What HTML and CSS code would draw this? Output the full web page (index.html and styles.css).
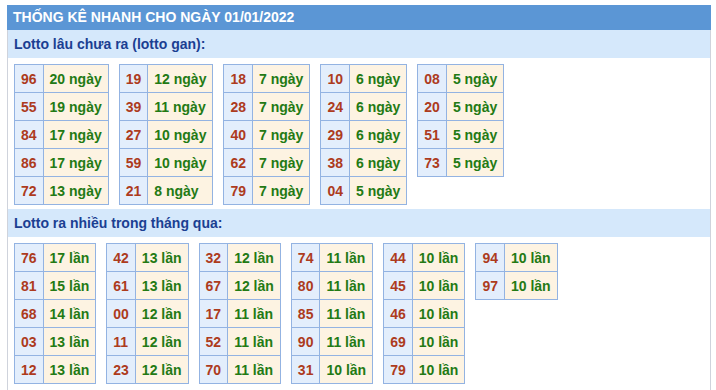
FILE: index.html
```html
<!DOCTYPE html>
<html lang="vi">
<head>
<meta charset="utf-8">
<link rel="stylesheet" href="styles.css">
</head>
<body>
<div class="box">
  <div class="title">THỐNG KÊ NHANH CHO NGÀY 01/01/2022</div>
  <div class="sec">Lotto lâu chưa ra (lotto gan):</div>
  <div class="tables">
    <table><tr><td class="n">96</td><td class="v">20 ngày</td></tr><tr><td class="n">55</td><td class="v">19 ngày</td></tr><tr><td class="n">84</td><td class="v">17 ngày</td></tr><tr><td class="n">86</td><td class="v">17 ngày</td></tr><tr><td class="n">72</td><td class="v">13 ngày</td></tr></table>
    <table><tr><td class="n">19</td><td class="v">12 ngày</td></tr><tr><td class="n">39</td><td class="v">11 ngày</td></tr><tr><td class="n">27</td><td class="v">10 ngày</td></tr><tr><td class="n">59</td><td class="v">10 ngày</td></tr><tr><td class="n">21</td><td class="v">8 ngày</td></tr></table>
    <table><tr><td class="n">18</td><td class="v">7 ngày</td></tr><tr><td class="n">28</td><td class="v">7 ngày</td></tr><tr><td class="n">40</td><td class="v">7 ngày</td></tr><tr><td class="n">62</td><td class="v">7 ngày</td></tr><tr><td class="n">79</td><td class="v">7 ngày</td></tr></table>
    <table><tr><td class="n">10</td><td class="v">6 ngày</td></tr><tr><td class="n">24</td><td class="v">6 ngày</td></tr><tr><td class="n">29</td><td class="v">6 ngày</td></tr><tr><td class="n">38</td><td class="v">6 ngày</td></tr><tr><td class="n">04</td><td class="v">5 ngày</td></tr></table>
    <table><tr><td class="n">08</td><td class="v">5 ngày</td></tr><tr><td class="n">20</td><td class="v">5 ngày</td></tr><tr><td class="n">51</td><td class="v">5 ngày</td></tr><tr><td class="n">73</td><td class="v">5 ngày</td></tr></table>
  </div>
  <div class="sec">Lotto ra nhiều trong tháng qua:</div>
  <div class="tables">
    <table><tr><td class="n">76</td><td class="v">17 lần</td></tr><tr><td class="n">81</td><td class="v">15 lần</td></tr><tr><td class="n">68</td><td class="v">14 lần</td></tr><tr><td class="n">03</td><td class="v">13 lần</td></tr><tr><td class="n">12</td><td class="v">13 lần</td></tr></table>
    <table><tr><td class="n">42</td><td class="v">13 lần</td></tr><tr><td class="n">61</td><td class="v">13 lần</td></tr><tr><td class="n">00</td><td class="v">12 lần</td></tr><tr><td class="n">11</td><td class="v">12 lần</td></tr><tr><td class="n">23</td><td class="v">12 lần</td></tr></table>
    <table><tr><td class="n">32</td><td class="v">12 lần</td></tr><tr><td class="n">67</td><td class="v">12 lần</td></tr><tr><td class="n">17</td><td class="v">11 lần</td></tr><tr><td class="n">52</td><td class="v">11 lần</td></tr><tr><td class="n">70</td><td class="v">11 lần</td></tr></table>
    <table><tr><td class="n">74</td><td class="v">11 lần</td></tr><tr><td class="n">80</td><td class="v">11 lần</td></tr><tr><td class="n">85</td><td class="v">11 lần</td></tr><tr><td class="n">90</td><td class="v">11 lần</td></tr><tr><td class="n">31</td><td class="v">10 lần</td></tr></table>
    <table><tr><td class="n">44</td><td class="v">10 lần</td></tr><tr><td class="n">45</td><td class="v">10 lần</td></tr><tr><td class="n">46</td><td class="v">10 lần</td></tr><tr><td class="n">69</td><td class="v">10 lần</td></tr><tr><td class="n">79</td><td class="v">10 lần</td></tr></table>
    <table><tr><td class="n">94</td><td class="v">10 lần</td></tr><tr><td class="n">97</td><td class="v">10 lần</td></tr></table>
  </div>
</div>
</body>
</html>
```
FILE: styles.css
```css
html, body {
  margin: 0;
  padding: 0;
  background: #fff;
}
body {
  font-family: "Liberation Sans", Arial, sans-serif;
  font-size: 14px;
  font-weight: bold;
}
.box {
  margin: 5px 0 0 7px;
  width: 702px;
  border-left: 1px solid #cfd3dc;
  border-right: 1px solid #cfd3dc;
  min-height: 400px;
}
.title {
  background: #5b96d5;
  color: #fff;
  height: 25px;
  line-height: 25px;
  padding-left: 6px;
  margin-left: -1px;
  margin-right: -1px;
}
.sec {
  background: #d5e8fb;
  color: #1b3f92;
  height: 28px;
  line-height: 28px;
  padding-left: 6px;
}
.tables {
  display: flex;
  align-items: flex-start;
  gap: 10px;
  padding: 6px 6px 4px 6px;
}
table {
  border-collapse: collapse;
}
td {
  border: 1px solid #93b3e2;
  height: 27px;
  padding: 0 6px;
  white-space: nowrap;
}
td.n {
  background: #e3eefc;
  color: #ad3b1d;
}
td.v {
  background: #fdf3e2;
  color: #237a14;
}
```
